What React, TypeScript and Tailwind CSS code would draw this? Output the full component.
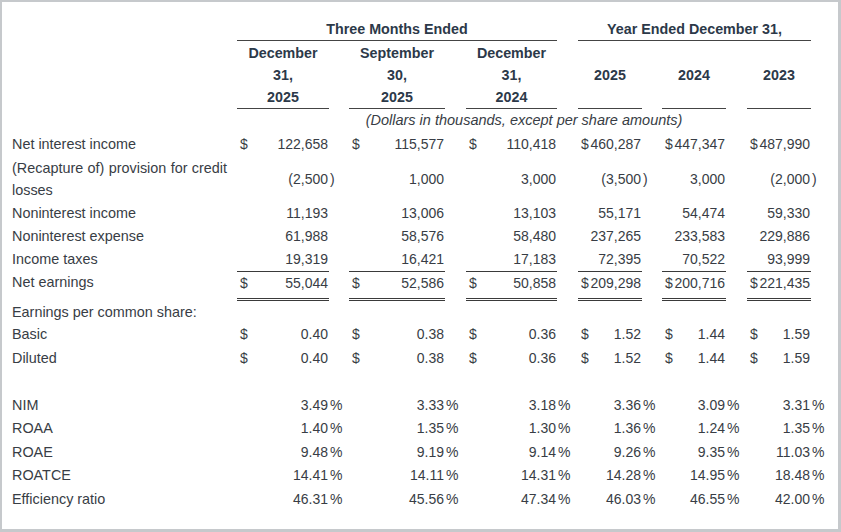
import type { ReactNode } from "react";

type Cell = {
  v: string;
  d?: boolean;
  s?: string;
};

const gridClass =
  "grid grid-cols-[225px_92px_20px_96px_21px_91px_21px_64px_20px_64px_21px_64px_1fr]";

const rows: { label: string; cells: Cell[] }[] = [
  {
    label: "Noninterest income",
    cells: [
      { v: "11,193" },
      { v: "13,006" },
      { v: "13,103" },
      { v: "55,171" },
      { v: "54,474" },
      { v: "59,330" },
    ],
  },
  {
    label: "Noninterest expense",
    cells: [
      { v: "61,988" },
      { v: "58,576" },
      { v: "58,480" },
      { v: "237,265" },
      { v: "233,583" },
      { v: "229,886" },
    ],
  },
  {
    label: "Income taxes",
    cells: [
      { v: "19,319" },
      { v: "16,421" },
      { v: "17,183" },
      { v: "72,395" },
      { v: "70,522" },
      { v: "93,999" },
    ],
  },
];

const ratios: { label: string; values: string[] }[] = [
  { label: "NIM", values: ["3.49", "3.33", "3.18", "3.36", "3.09", "3.31"] },
  { label: "ROAA", values: ["1.40", "1.35", "1.30", "1.36", "1.24", "1.35"] },
  { label: "ROAE", values: ["9.48", "9.19", "9.14", "9.26", "9.35", "11.03"] },
  {
    label: "ROATCE",
    values: ["14.41", "14.11", "14.31", "14.28", "14.95", "18.48"],
  },
  {
    label: "Efficiency ratio",
    values: ["46.31", "45.56", "47.34", "46.03", "46.55", "42.00"],
  },
];

function Cells({
  cells,
  lineClass = "",
}: {
  cells: Cell[];
  lineClass?: string;
}) {
  return (
    <>
      {cells.map((c, i) => (
        <div key={i} className="contents">
          <div className={`flex justify-between pl-[3px] pr-px ${lineClass}`}>
            <span>{c.d ? "$" : ""}</span>
            <span>{c.v}</span>
          </div>
          <div className="pl-[1px]">{c.s ?? ""}</div>
        </div>
      ))}
    </>
  );
}

function Row({
  label,
  children,
  className = "",
}: {
  label: ReactNode;
  children: ReactNode;
  className?: string;
}) {
  return (
    <div className={`${gridClass} items-center ${className}`}>
      <div className="text-[14.4px]">{label}</div>
      {children}
    </div>
  );
}

export default function App() {
  return (
    <div className="h-[532px] w-[841px] overflow-hidden border-b-[3px] border-l-2 border-r-[3px] border-t-2 border-[#c6c9cc] bg-white pl-[10px] pt-4 font-['Liberation_Sans',Arial,sans-serif] text-[14px] text-[#383d45]">
      {/* column headings */}
      <div
        className={`${gridClass} text-[14.3px] font-bold leading-[22px] text-[#2c3949]`}
      >
        <div />
        <div className="col-span-5 border-b border-[#444] text-center">
          Three Months Ended
        </div>
        <div />
        <div className="col-span-5 border-b border-[#444] text-center">
          Year Ended December 31,
        </div>
      </div>
      <div
        className={`${gridClass} pt-px text-[14.3px] font-bold leading-[22px] text-[#2c3949]`}
      >
        <div />
        <div className="border-b border-[#444] text-center">
          December
          <br />
          31,
          <br />
          2025
        </div>
        <div />
        <div className="border-b border-[#444] text-center">
          September
          <br />
          30,
          <br />
          2025
        </div>
        <div />
        <div className="border-b border-[#444] text-center">
          December
          <br />
          31,
          <br />
          2024
        </div>
        <div />
        <div className="flex items-center justify-center border-b border-[#444]">
          2025
        </div>
        <div />
        <div className="flex items-center justify-center border-b border-[#444]">
          2024
        </div>
        <div />
        <div className="flex items-center justify-center border-b border-[#444]">
          2023
        </div>
      </div>
      <div className={`${gridClass} leading-[23px]`}>
        <div />
        <div className="col-span-11 text-center text-[14.5px] italic">
          (Dollars in thousands, except per share amounts)
        </div>
      </div>

      {/* income statement */}
      <div className="leading-[23px]">
        <Row label="Net interest income" className="pt-px">
          <Cells
            cells={[
              { v: "122,658", d: true },
              { v: "115,577", d: true },
              { v: "110,418", d: true },
              { v: "460,287", d: true },
              { v: "447,347", d: true },
              { v: "487,990", d: true },
            ]}
          />
        </Row>
        <Row
          label={
            <div className="w-[215px] text-justify leading-[22px]">
              (Recapture of) provision for credit losses
            </div>
          }
          className="h-[46px]"
        >
          <Cells
            cells={[
              { v: "(2,500", s: ")" },
              { v: "1,000" },
              { v: "3,000" },
              { v: "(3,500", s: ")" },
              { v: "3,000" },
              { v: "(2,000", s: ")" },
            ]}
          />
        </Row>
        {rows.map((r) => (
          <Row key={r.label} label={r.label}>
            <Cells cells={r.cells} />
          </Row>
        ))}
        <Row label="Net earnings" className="items-stretch">
          <Cells
            lineClass="border-t border-b-[3px] border-double border-[#3a3a3a] pb-[3px]"
            cells={[
              { v: "55,044", d: true },
              { v: "52,586", d: true },
              { v: "50,858", d: true },
              { v: "209,298", d: true },
              { v: "200,716", d: true },
              { v: "221,435", d: true },
            ]}
          />
        </Row>
        <div className="h-[22px] text-[14.4px] leading-[22px]">
          Earnings per common share:
        </div>
      </div>

      {/* per share and ratios */}
      <div className="leading-[23.5px]">
        <Row label="Basic">
          <Cells
            cells={["0.40", "0.38", "0.36", "1.52", "1.44", "1.59"].map(
              (v) => ({ v, d: true }),
            )}
          />
        </Row>
        <Row label="Diluted">
          <Cells
            cells={["0.40", "0.38", "0.36", "1.52", "1.44", "1.59"].map(
              (v) => ({ v, d: true }),
            )}
          />
        </Row>
        <div className="h-[23.5px]" />
        {ratios.map((r) => (
          <Row key={r.label} label={r.label}>
            <Cells cells={r.values.map((v) => ({ v, s: "%" }))} />
          </Row>
        ))}
      </div>
    </div>
  );
}
